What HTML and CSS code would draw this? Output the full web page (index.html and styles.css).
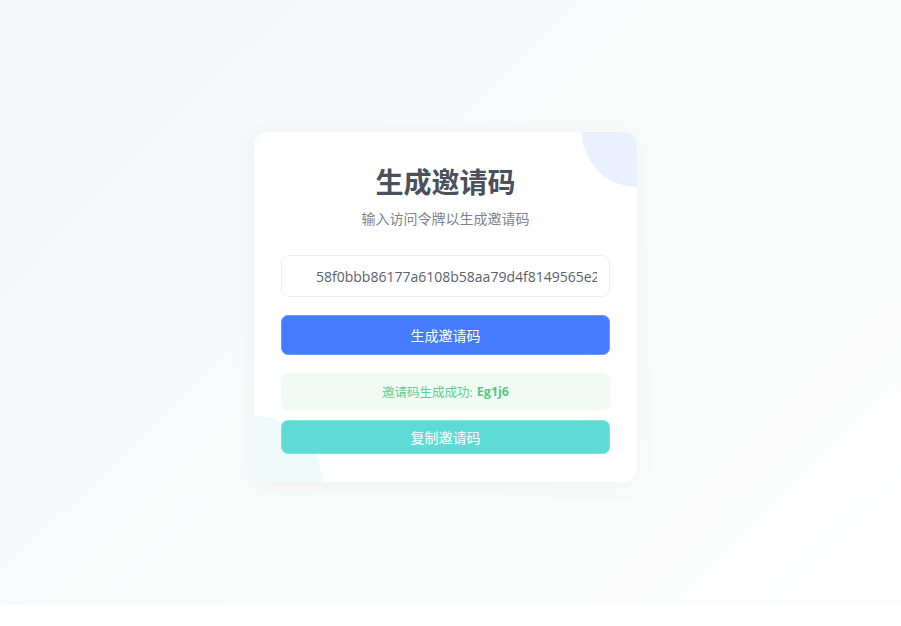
FILE: index.html
```html
<!DOCTYPE html>
<html lang="zh-CN">
<head>
<meta charset="UTF-8">
<title>生成邀请码</title>
<link rel="stylesheet" href="styles.css">
</head>
<body>
<div class="page">
  <div class="card">
    <span class="blob blob-tr"></span>
    <span class="blob blob-bl"></span>
    <h1 class="title">生成邀请码</h1>
    <p class="subtitle">输入访问令牌以生成邀请码</p>
    <input class="token" type="text" value="58f0bbb86177a6108b58aa79d4f8149565e2a1c3" readonly>
    <button class="btn btn-primary">生成邀请码</button>
    <div class="result">邀请码生成成功: <strong>Eg1j6</strong></div>
    <button class="btn btn-copy">复制邀请码</button>
  </div>
</div>
</body>
</html>
```

FILE: styles.css
```css
* { box-sizing: border-box; }
html, body {
  margin: 0;
  padding: 0;
  background: #ffffff;
  font-family: "Open Sans", "Noto Sans CJK SC", sans-serif;
}
.page {
  height: 605px;
  padding: 9px 10px 0 0;
  display: flex;
  align-items: center;
  justify-content: center;
  background: linear-gradient(135deg, #f5f6f9 0%, #f9fafa 50%, #fdfdfd 100%);
}
.card {
  position: relative;
  overflow: hidden;
  width: 383px;
  height: 350px;
  padding: 31px 27px 28px;
  background: #ffffff;
  border-radius: 14px;
  box-shadow: 0 4px 24px rgba(30, 40, 60, 0.04);
  display: flex;
  flex-direction: column;
}
.blob {
  position: absolute;
  border-radius: 50%;
}
.blob-tr {
  width: 110px;
  height: 110px;
  top: -55px;
  right: -55px;
  background: #ebf0fe;
}
.blob-bl {
  width: 136px;
  height: 136px;
  bottom: -70px;
  left: -68px;
  background: #effafa;
}
.title {
  position: relative;
  margin: 0;
  font-size: 28px;
  line-height: 36px;
  font-weight: 700;
  color: #4a505c;
  text-align: center;
  font-family: "Noto Sans CJK SC", sans-serif;
}
.subtitle {
  position: relative;
  margin: 8px 0 0;
  font-size: 14px;
  line-height: 22px;
  color: #7d838f;
  text-align: center;
  font-family: "Noto Sans CJK SC", sans-serif;
}
.token {
  position: relative;
  margin-top: 26px;
  width: 100%;
  height: 42px;
  padding: 0 12px 0 34px;
  border: 1px solid #eceef2;
  border-radius: 8px;
  background: #ffffff;
  font-family: "Open Sans", sans-serif;
  font-size: 14px;
  color: #5b616d;
  outline: none;
}
.btn {
  position: relative;
  width: 100%;
  border: 1px solid transparent;
  border-radius: 7px;
  color: #ffffff;
  font-family: "Noto Sans CJK SC", sans-serif;
  font-size: 14px;
  cursor: pointer;
}
.btn-primary {
  margin-top: 18px;
  height: 40px;
  background: #457cff;
  border-color: #6d97ff;
}
.result {
  position: relative;
  margin-top: 18px;
  height: 37px;
  display: flex;
  align-items: center;
  justify-content: center;
  background: #f1fbf4;
  border-radius: 7px;
  color: #63cf8d;
  font-size: 12.5px;
  font-family: "Open Sans", "Noto Sans CJK SC", sans-serif;
}
.result strong {
  margin-left: 4px;
  font-weight: 700;
  color: #55c982;
}
.btn-copy {
  margin-top: 10px;
  height: 34px;
  background: #5fdbd5;
  border-color: #80e3de;
}
```
